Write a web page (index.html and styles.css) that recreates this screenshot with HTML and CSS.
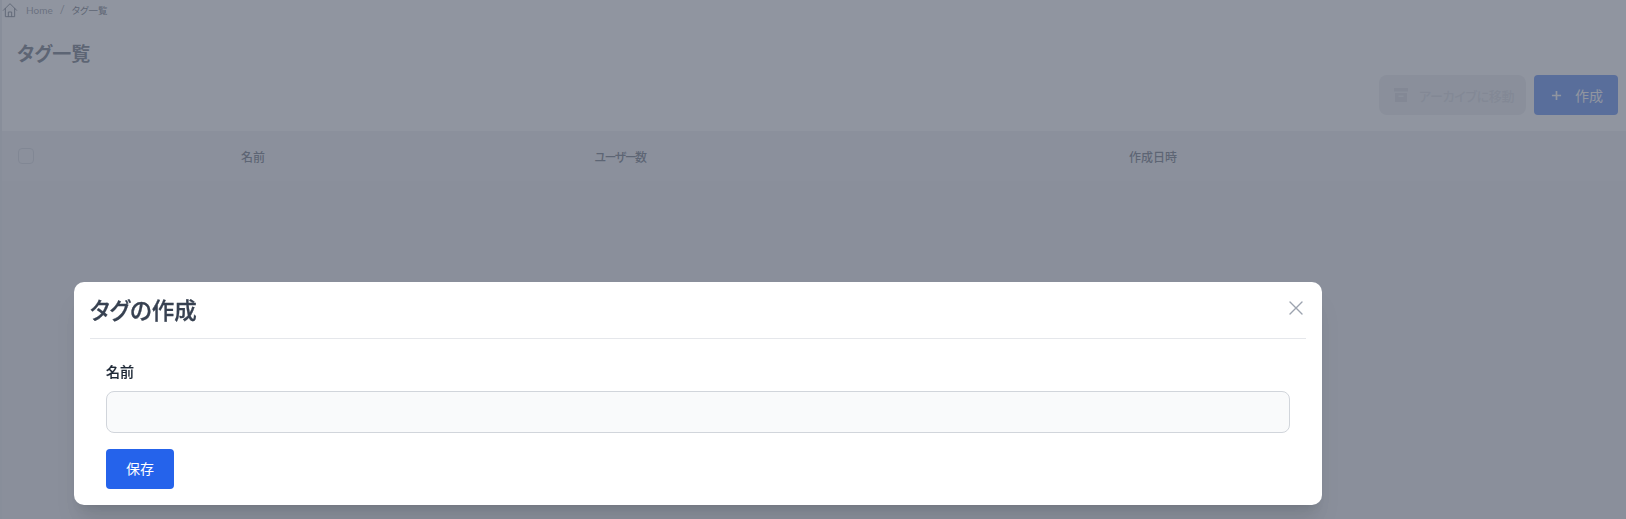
FILE: index.html
```html
<!DOCTYPE html>
<html lang="ja">
<head>
  <meta charset="UTF-8" />
  <meta name="viewport" content="width=device-width, initial-scale=1.0"/>
  <title>タグ一覧</title>
  <link rel="stylesheet" href="styles.css">
</head>
<body>

  <div class="page">
    <nav class="breadcrumb">
      <svg class="home-icon" viewBox="0 0 24 24" fill="none" stroke="currentColor" stroke-width="1.5" stroke-linecap="round" stroke-linejoin="round">
        <path d="M2 12.500 12 2.500 22 12.500"/>
        <path d="M5 9.500V22h14V9.500"/>
        <path d="M9.500 22v-7h5v7"/>
      </svg>
      <a class="crumb-link">Home</a>
      <span class="crumb-sep">/</span>
      <span class="crumb-current">タグ一覧</span>
    </nav>

    <h1 class="page-title">タグ一覧</h1>

    <div class="actions">
      <button class="btn-archive">
        <svg class="archive-icon" viewBox="0 0 16 16" fill="currentColor">
          <path d="M1 1h14v3.500H1z"/>
          <path fill-rule="evenodd" d="M2 6h12v9H2zM5.500 8.500v1.500h5V8.500z"/>
        </svg>
        アーカイブに移動
      </button>
      <button class="btn-create">
        <svg class="plus-icon" viewBox="0 0 12 12" fill="none" stroke="currentColor" stroke-width="1.8">
          <path d="M6 1v10M1 6h10"/>
        </svg>
        作成
      </button>
    </div>

    <div class="table-area">
      <div class="table-head">
        <div class="cell-check"><span class="checkbox"></span></div>
        <div class="cell">名前</div>
        <div class="cell cell-tight">ユーザー数</div>
        <div class="cell">作成日時</div>
        <div class="cell"></div>
      </div>
    </div>
  </div>

  <div class="overlay">
    <div class="modal">
      <div class="modal-header">
        <h2 class="modal-title">タグの作成</h2>
        <button class="modal-close">
          <svg viewBox="0 0 14 14" fill="none" stroke="currentColor" stroke-width="1.4" stroke-linecap="round">
            <path d="M1 1l12 12M13 1L1 13"/>
          </svg>
        </button>
      </div>
      <form class="modal-body">
        <label class="field-label" for="tag-name">名前</label>
        <input class="field-input" id="tag-name" type="text">
        <button class="btn-save" type="button">保存</button>
      </form>
    </div>
  </div>

</body>
</html>
```

FILE: styles.css
```css
* {
  box-sizing: border-box;
}

body {
  margin: 0;
  height: 519px;
  overflow: hidden;
  position: relative;
  background: #dfe1e6;
  color: #374151;
  font-family: "Lato", "Noto Sans CJK JP", sans-serif;
  font-feature-settings: "palt";
}

button {
  font-family: inherit;
  font-feature-settings: inherit;
  border: none;
}

.page {
  height: 100%;
  margin-left: 2px;
  background: #fff;
  display: flex;
  flex-direction: column;
}

.breadcrumb {
  display: flex;
  align-items: center;
  height: 19px;
  font-size: 10px;
  color: #6b7280;
}

.home-icon {
  width: 16px;
  height: 16px;
  color: #4b5563;
  margin-right: 8px;
}

.crumb-link {
  color: #6b7280;
}

.crumb-sep {
  margin: 0 7px;
  font-size: 11px;
}

.crumb-current {
  font-size: 9.5px;
  color: #374151;
}

.page-title {
  margin: 21px 0 0 15px;
  font-size: 19px;
  line-height: 28px;
  font-weight: 700;
  color: #374151;
}

.actions {
  display: flex;
  justify-content: flex-end;
  gap: 8px;
  margin-top: 7px;
  padding-right: 8px;
}

.btn-archive,
.btn-create {
  display: flex;
  align-items: center;
  height: 40px;
  padding-bottom: 1px;
  white-space: nowrap;
}

.btn-archive {
  width: 147px;
  padding-left: 14px;
  gap: 10px;
  border-radius: 8px;
  background: #e5e7eb;
  color: #c9ccd3;
  font-size: 13px;
  font-weight: 500;
  letter-spacing: -0.3px;
}

.archive-icon {
  width: 16px;
  height: 16px;
  color: #c9ccd3;
}

.btn-create {
  width: 84px;
  padding-left: 17px;
  gap: 13px;
  border-radius: 4px;
  background: #2563eb;
  color: #fff;
  font-size: 14px;
}

.plus-icon {
  width: 11px;
  height: 11px;
}

.table-area {
  flex: 1;
  margin-top: 16px;
  background: #e5e7eb;
}

.table-head {
  display: grid;
  grid-template-columns: 78px 346px 388px 678px 1fr;
  align-items: center;
  height: 50px;
  background: #e9ebee;
}

.cell-check {
  padding-left: 16px;
  display: flex;
}

.checkbox {
  width: 16px;
  height: 16px;
  border: 1px solid #c4c7ce;
  border-radius: 4px;
  background: #e9ebee;
}

.cell {
  text-align: center;
  font-size: 12px;
  font-weight: 500;
  color: #374151;
}

.cell-tight {
  letter-spacing: -1.5px;
}

.overlay {
  position: absolute;
  inset: 0;
  display: flex;
  align-items: flex-end;
  padding: 0 0 14px 74px;
  background: rgba(107, 114, 128, 0.75);
  backdrop-filter: blur(0.6px);
}

.modal {
  width: 1248px;
  height: 223px;
  background: #fff;
  border-radius: 10px;
  box-shadow: 0 20px 25px -5px rgba(0, 0, 0, 0.1), 0 8px 10px -6px rgba(0, 0, 0, 0.1);
  padding: 0 16px;
}

.modal-header {
  display: flex;
  justify-content: space-between;
  height: 57px;
  padding-top: 13px;
  border-bottom: 1px solid #e5e7eb;
}

.modal-title {
  margin: 0;
  font-size: 22.5px;
  line-height: 32px;
  font-weight: 500;
  -webkit-text-stroke: 0.3px #374151;
  color: #374151;
}

.modal-close {
  width: 14px;
  height: 14px;
  margin: 6px 3px 0 0;
  padding: 0;
  background: none;
  color: #9ca3af;
}

.modal-close svg {
  display: block;
  width: 14px;
  height: 14px;
}

.modal-body {
  display: flex;
  flex-direction: column;
  align-items: flex-start;
  padding: 24px 16px 0;
}

.field-label {
  font-size: 14px;
  line-height: 18px;
  font-weight: 500;
  -webkit-text-stroke: 0.2px #1f2937;
  color: #1f2937;
}

.field-input {
  width: 100%;
  height: 42px;
  margin-top: 10px;
  border: 1px solid #d1d5db;
  border-radius: 8px;
  background: #f9fafb;
}

.btn-save {
  width: 68px;
  height: 40px;
  margin-top: 16px;
  padding-bottom: 3px;
  border-radius: 4px;
  background: #2563eb;
  color: #fff;
  font-size: 14px;
}
```
